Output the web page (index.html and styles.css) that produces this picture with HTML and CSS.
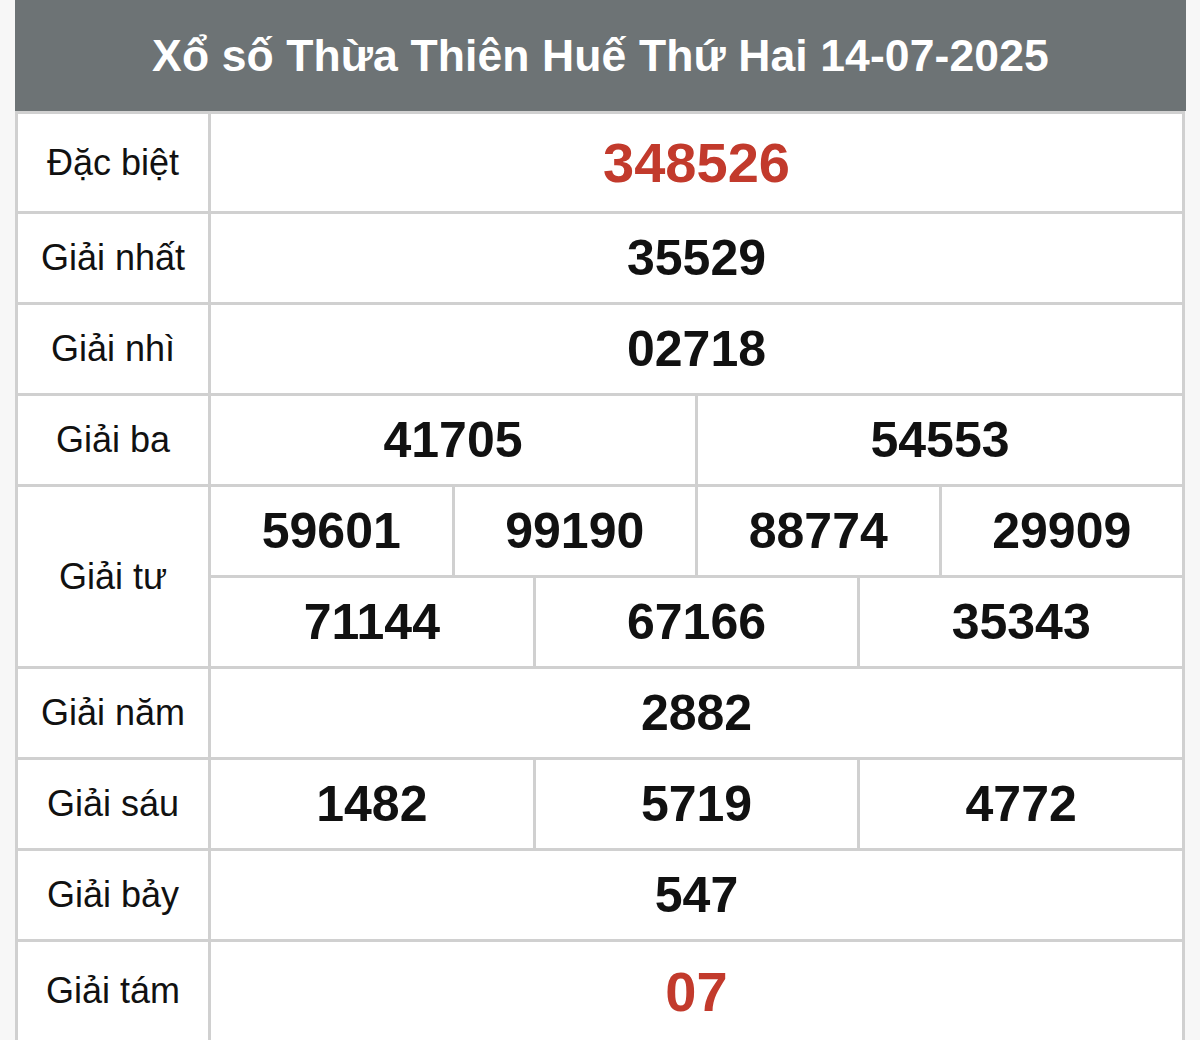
FILE: index.html
```html
<!DOCTYPE html>
<html lang="vi">
<head>
<meta charset="utf-8">
<title>Xổ số Thừa Thiên Huế</title>
<link rel="stylesheet" href="styles.css">
</head>
<body>
<div class="board">
  <div class="title">Xổ số Thừa Thiên Huế Thứ Hai 14-07-2025</div>
  <div class="grid">
    <div class="row row-first">
      <div class="label">Đặc biệt</div>
      <div class="main"><div class="cell num red big">348526</div></div>
    </div>
    <div class="row">
      <div class="label">Giải nhất</div>
      <div class="main"><div class="cell num">35529</div></div>
    </div>
    <div class="row">
      <div class="label">Giải nhì</div>
      <div class="main"><div class="cell num">02718</div></div>
    </div>
    <div class="row">
      <div class="label">Giải ba</div>
      <div class="main"><div class="cell num">41705</div><div class="cell num">54553</div></div>
    </div>
    <div class="row">
      <div class="label">Giải tư</div>
      <div class="stack">
        <div class="main"><div class="cell num">59601</div><div class="cell num">99190</div><div class="cell num">88774</div><div class="cell num">29909</div></div>
        <div class="main sub"><div class="cell num">71144</div><div class="cell num">67166</div><div class="cell num">35343</div></div>
      </div>
    </div>
    <div class="row">
      <div class="label">Giải năm</div>
      <div class="main"><div class="cell num">2882</div></div>
    </div>
    <div class="row">
      <div class="label">Giải sáu</div>
      <div class="main"><div class="cell num">1482</div><div class="cell num">5719</div><div class="cell num">4772</div></div>
    </div>
    <div class="row">
      <div class="label">Giải bảy</div>
      <div class="main"><div class="cell num">547</div></div>
    </div>
    <div class="row row-last">
      <div class="label">Giải tám</div>
      <div class="main"><div class="cell num red big">07</div></div>
    </div>
  </div>
</div>
</body>
</html>
```

FILE: styles.css
```css
html, body {
  margin: 0;
  padding: 0;
  background: #f7f7f7;
}

body {
  font-family: "Liberation Sans", Arial, Helvetica, sans-serif;
  color: #111;
}

.board {
  margin-left: 15px;
  width: 1171px;
}

.title {
  height: 111px;
  background: #6d7375;
  color: #ffffff;
  font-weight: bold;
  font-size: 44.5px;
  display: flex;
  align-items: center;
  justify-content: center;
  letter-spacing: 0.1px;
}

.grid {
  width: 1170px;
  box-sizing: border-box;
  border-left: 3px solid #d0d0d0;
  border-right: 3px solid #d0d0d0;
  background: #ffffff;
}

.row {
  display: flex;
  border-top: 3px solid #d0d0d0;
  min-height: 88px;
}

.row-first {
  min-height: 97px;
}

.row-last {
  min-height: 98px;
}

.label {
  width: 190px;
  flex: none;
  border-right: 3px solid #d0d0d0;
  display: flex;
  align-items: center;
  justify-content: center;
  font-size: 36px;
  color: #111;
}

.stack {
  flex: 1;
  display: flex;
  flex-direction: column;
}

.main {
  flex: 1;
  display: flex;
  min-height: 88px;
}

.main.sub {
  border-top: 3px solid #d0d0d0;
}

.cell {
  flex: 1;
  display: flex;
  align-items: center;
  justify-content: center;
}

.cell + .cell {
  border-left: 3px solid #d0d0d0;
}

.num {
  font-weight: bold;
  font-size: 50px;
  color: #111;
}

.num.big {
  font-size: 56px;
}

.red {
  color: #c23a2c;
}
```
